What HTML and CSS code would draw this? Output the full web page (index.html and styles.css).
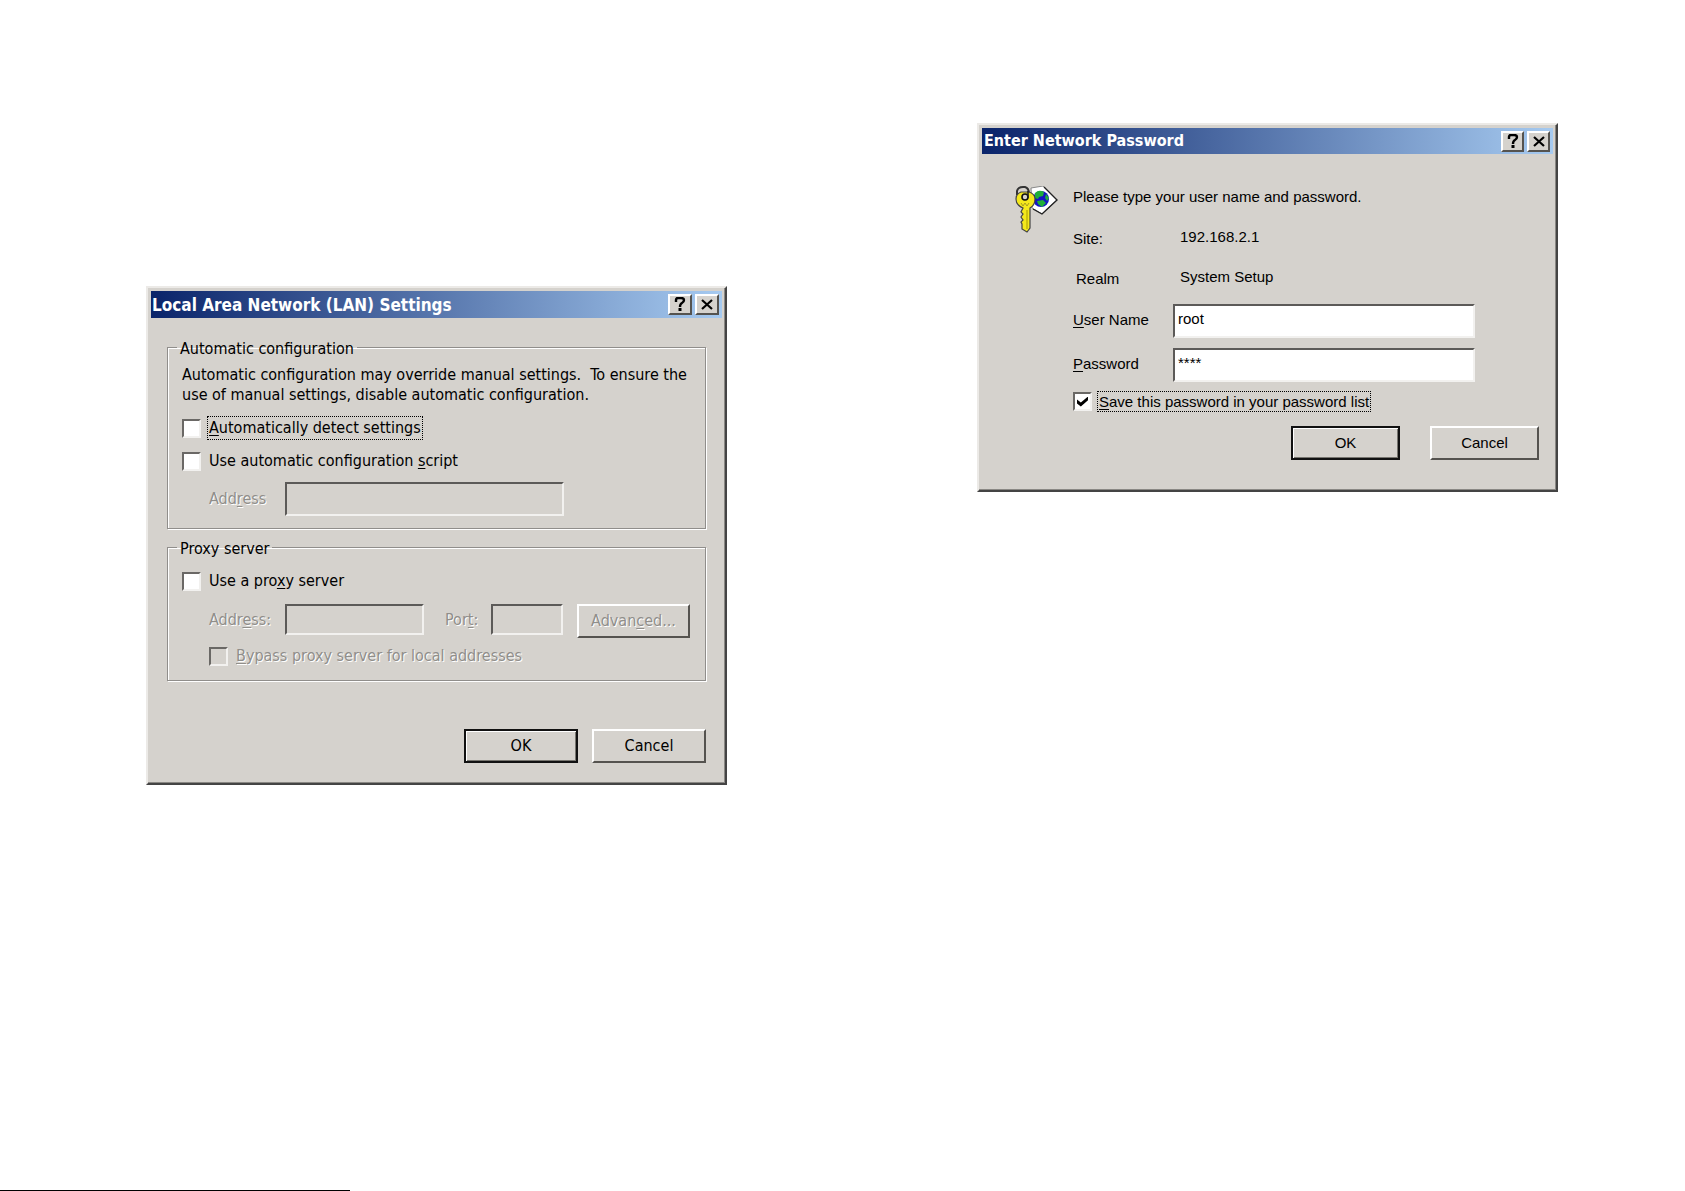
FILE: index.html
```html
<!DOCTYPE html>
<html lang="en">
<head>
    <meta charset="UTF-8">
    <title>Network Settings</title>
    <link rel="stylesheet" href="styles.css">
</head>
<body>
    <main class="page">
        <section class="dialog lan-dialog">
            <header class="title-bar">
                <h2>Local Area Network (LAN) Settings</h2>
                <button class="title-btn" aria-label="Help">
                    <svg width="12" height="15" viewBox="0 0 12 15"><path d="M2 5V3Q2 1 4 1H7Q10 1 10 3Q10 5 8 6Q6 7 6 10" fill="none" stroke="#000" stroke-width="2.4"/><rect x="4.5" y="11" width="3" height="3"/></svg>
                </button>
                <button class="title-btn" aria-label="Close">
                    <svg width="14" height="13" viewBox="0 0 14 13"><path d="M2 2L12 11M12 2L2 11" stroke="#000" stroke-width="2.2"/></svg>
                </button>
            </header>
            <form class="lan-form">
                <fieldset class="auto-config">
                    <legend>Automatic configuration</legend>
                    <p>Automatic configuration may override manual settings.&nbsp; To ensure the<br>use of manual settings, disable automatic configuration.</p>
                    <div class="check-row">
                        <input type="checkbox" id="autoDetect">
                        <label for="autoDetect" class="focused"><u>A</u>utomatically detect settings</label>
                    </div>
                    <div class="check-row">
                        <input type="checkbox" id="autoScript">
                        <label for="autoScript">Use automatic configuration <u>s</u>cript</label>
                    </div>
                    <div class="field-row script-row">
                        <label for="scriptAddress" class="disabled">Add<u>r</u>ess</label>
                        <input type="text" id="scriptAddress" disabled>
                    </div>
                </fieldset>
                <fieldset class="proxy">
                    <legend>Proxy server</legend>
                    <div class="check-row">
                        <input type="checkbox" id="useProxy">
                        <label for="useProxy">Use a pro<u>x</u>y server</label>
                    </div>
                    <div class="field-row proxy-row">
                        <label for="proxyAddress" class="disabled">Addr<u>e</u>ss:</label>
                        <input type="text" id="proxyAddress" disabled>
                        <label for="proxyPort" class="disabled port-label">Por<u>t</u>:</label>
                        <input type="text" id="proxyPort" disabled>
                        <button type="button" class="btn advanced" disabled>Advan<u>c</u>ed...</button>
                    </div>
                    <div class="check-row bypass">
                        <input type="checkbox" id="bypass" disabled>
                        <label for="bypass" class="disabled"><u>B</u>ypass proxy server for local addresses</label>
                    </div>
                </fieldset>
                <div class="actions">
                    <button type="button" class="btn default">OK</button>
                    <button type="button" class="btn">Cancel</button>
                </div>
            </form>
        </section>

        <section class="dialog password-dialog">
            <header class="title-bar">
                <h2>Enter Network Password</h2>
                <button class="title-btn" aria-label="Help">
                    <svg width="12" height="15" viewBox="0 0 12 15"><path d="M2 5V3Q2 1 4 1H7Q10 1 10 3Q10 5 8 6Q6 7 6 10" fill="none" stroke="#000" stroke-width="2.4"/><rect x="4.5" y="11" width="3" height="3"/></svg>
                </button>
                <button class="title-btn" aria-label="Close">
                    <svg width="14" height="13" viewBox="0 0 14 13"><path d="M2 2L12 11M12 2L2 11" stroke="#000" stroke-width="2.2"/></svg>
                </button>
            </header>
            <form class="password-form">
                <svg class="key-icon" width="44" height="48" viewBox="0 0 44 48">
                    <path d="M16 2L28 0L42 14L27 28L17 22Z" fill="#fff" stroke="#888" stroke-width="1"/>
                    <path d="M29 1L42 14L27 28L18 23" fill="none" stroke="#222" stroke-width="1.4"/>
                    <circle cx="26" cy="13" r="8" fill="#1414c4"/>
                    <path d="M20 7Q24 3 29 6L28 10L24 11L23 13L20 12ZM31 8L34 12L32 15L30 12ZM22 15L28 14L31 17L27 21L23 18Z" fill="#1fae3a"/>
                    <path d="M2 9V5Q3 1 8 1H10Q14 2 14 8" fill="none" stroke="#333" stroke-width="2"/>
                    <path d="M6 6H14Q20 8 20 13Q20 19 15 22V42L12 46L7 43V38L6 36L8 34L6 31L8 28L6 26L8 22Q1 19 1 13Q1 8 6 6Z" fill="#f4e81c" stroke="#444" stroke-width="1.2"/>
                    <path d="M12 24V43" stroke="#a89c00" stroke-width="1"/>
                    <path d="M6 17L8 20L10 17L12 20L14 17" fill="none" stroke="#a89c20" stroke-width="1"/>
                    <circle cx="10" cy="11" r="3" fill="#d5d2cd" stroke="#111" stroke-width="1.6"/>
                    <path d="M13 5V12" stroke="#222" stroke-width="1.6"/>
                </svg>
                <div class="password-fields">
                    <p>Please type your user name and password.</p>
                    <dl class="site-info">
                        <dt>Site:</dt>
                        <dd>192.168.2.1</dd>
                        <dt class="realm">Realm</dt>
                        <dd>System Setup</dd>
                    </dl>
                    <div class="credential">
                        <label for="userName"><u>U</u>ser Name</label>
                        <input type="text" id="userName" value="root">
                    </div>
                    <div class="credential">
                        <label for="password"><u>P</u>assword</label>
                        <input type="text" id="password" value="****">
                    </div>
                    <div class="check-row">
                        <input type="checkbox" id="savePassword" checked>
                        <label for="savePassword" class="focused"><u>S</u>ave this password in your password list</label>
                    </div>
                </div>
                <div class="actions">
                    <button type="button" class="btn default">OK</button>
                    <button type="button" class="btn">Cancel</button>
                </div>
            </form>
        </section>
    </main>
    <footer class="page-rule"></footer>
</body>
</html>
```
FILE: styles.css
```css
* {
    box-sizing: border-box;
}
body {
    display: flex;
    flex-direction: column;
    min-height: 100vh;
    margin: 0;
    background: #fff;
    color: #000;
    font-family: "DejaVu Sans Condensed", "DejaVu Sans", sans-serif;
    font-size: 16px;
    line-height: 20px;
}
h2, p, dl, dd {
    margin: 0;
}
input, button {
    font: inherit;
    color: inherit;
}
u {
    text-underline-offset: 2px;
}
.page {
    flex: 1;
    display: grid;
    grid-template-columns: 1fr 1fr;
    align-items: start;
    gap: 250px;
    padding: 123px 127px 0 146px;
}

/* window frame */
.dialog {
    background: #d5d2cd;
    padding: 3px;
    border: 2px solid;
    border-color: #eceae7 #444 #444 #eceae7;
    box-shadow: inset -1px -1px #8a8884;
}
.lan-dialog {
    margin-top: 163px;
}
.title-bar {
    display: flex;
    align-items: center;
    gap: 3px;
    height: 27px;
    padding: 0 3px 0 1px;
    background: linear-gradient(to right, #0a246a, #a6caf0);
}
.title-bar h2 {
    flex: 1;
    color: #fff;
    font-size: 17px;
    font-weight: bold;
    white-space: nowrap;
}
.title-btn {
    display: flex;
    justify-content: center;
    align-items: center;
    width: 24px;
    height: 21px;
    padding: 0;
    background: #d5d2cd;
    border: 2px solid;
    border-color: #fff #55534f #55534f #fff;
}

/* controls */
.btn {
    height: 34px;
    padding: 0;
    background: #d5d2cd;
    border: 2px solid;
    border-color: #fff #55534f #55534f #fff;
}
.btn.default {
    border-color: #111;
    box-shadow: inset 1px 1px #fff, inset -1px -1px #77756f;
}
.btn:disabled,
.disabled {
    color: #908e8a;
    text-shadow: 1px 1px #fff;
}
input[type="text"] {
    min-width: 0;
    height: 34px;
    padding: 0 3px;
    background: #fff;
    border: 2px solid;
    border-color: #5c5a58 #f2f1ef #f2f1ef #5c5a58;
    border-radius: 0;
}
input[type="text"]:disabled {
    background: #d5d2cd;
}
input[type="checkbox"] {
    appearance: none;
    display: grid;
    place-items: center;
    width: 19px;
    height: 19px;
    margin: 0;
    background: #fff;
    border: 2px solid;
    border-color: #6a6865 #f2f1ef #f2f1ef #6a6865;
}
input[type="checkbox"]:disabled {
    background: #d5d2cd;
}
input[type="checkbox"]:checked::before {
    content: "";
    width: 11px;
    height: 10px;
    background: #000;
    clip-path: polygon(0 30%, 35% 60%, 100% 0, 100% 38%, 35% 100%, 0 70%);
}
.check-row {
    display: flex;
    align-items: center;
    gap: 8px;
}
.focused {
    outline: 1px dotted #000;
    outline-offset: 1px;
}
.actions {
    display: flex;
    justify-content: flex-end;
}

/* LAN settings */
.lan-form {
    padding: 16px 16px 17px;
}
fieldset {
    margin: 0;
    padding: 0 14px;
    border: 1px solid #908e8b;
    box-shadow: inset 1px 1px #fff, 1px 1px #fff;
}
legend {
    margin-left: -5px;
    padding: 4px 3px 0;
    line-height: 22px;
}
.auto-config {
    padding-top: 5px;
    padding-bottom: 12px;
}
.auto-config .check-row {
    margin-top: 13px;
}
.field-row {
    display: grid;
    align-items: center;
    padding-left: 27px;
}
.script-row {
    grid-template-columns: 76px 279px;
    margin-top: 11px;
}
.proxy {
    margin-top: 5px;
    padding-top: 11px;
    padding-bottom: 14px;
}
.proxy-row {
    grid-template-columns: 76px 139px 67px 72px 127px;
    align-items: start;
    margin-top: 13px;
}
.proxy-row input[type="text"] {
    height: 31px;
}
.proxy-row label {
    line-height: 31px;
}
.port-label {
    padding-left: 21px;
}
.advanced {
    margin-left: 14px;
}
.proxy .bypass {
    margin-top: 8px;
    padding-left: 27px;
}
.lan-form .actions {
    gap: 14px;
    margin-top: 48px;
}
.lan-form .actions .btn {
    width: 114px;
}

/* password prompt */
.password-dialog {
    font-family: "Liberation Sans", Arial, sans-serif;
    font-size: 15px;
}
.password-dialog .title-bar {
    height: 26px;
    padding-left: 2px;
}
.password-dialog h2 {
    font-family: "DejaVu Sans Condensed", "DejaVu Sans", sans-serif;
    font-size: 16px;
}
.password-dialog .title-btn {
    width: 23px;
}
.password-form {
    display: grid;
    grid-template-columns: 58px 1fr;
    padding: 32px 14px 27px 33px;
}
.password-fields p {
    line-height: 22px;
}
.site-info,
.credential {
    display: grid;
    grid-template-columns: 100px 302px;
    align-items: center;
}
.site-info {
    row-gap: 16px;
    margin: 19px 0 13px;
}
.site-info dd {
    padding: 0 0 4px 7px;
}
.realm {
    padding-left: 3px;
}
.credential {
    margin-bottom: 10px;
}
.credential label {
    padding-bottom: 2px;
}
.credential input[type="text"] {
    padding-bottom: 5px;
}
.password-fields .check-row {
    gap: 7px;
}
.password-fields .focused {
    line-height: 17px;
}
.password-form .actions {
    grid-column: 1 / -1;
    gap: 30px;
    margin-top: 15px;
}
.password-form .actions .btn {
    width: 109px;
}

.page-rule {
    width: 350px;
    border-top: 1px solid #000;
}
```
